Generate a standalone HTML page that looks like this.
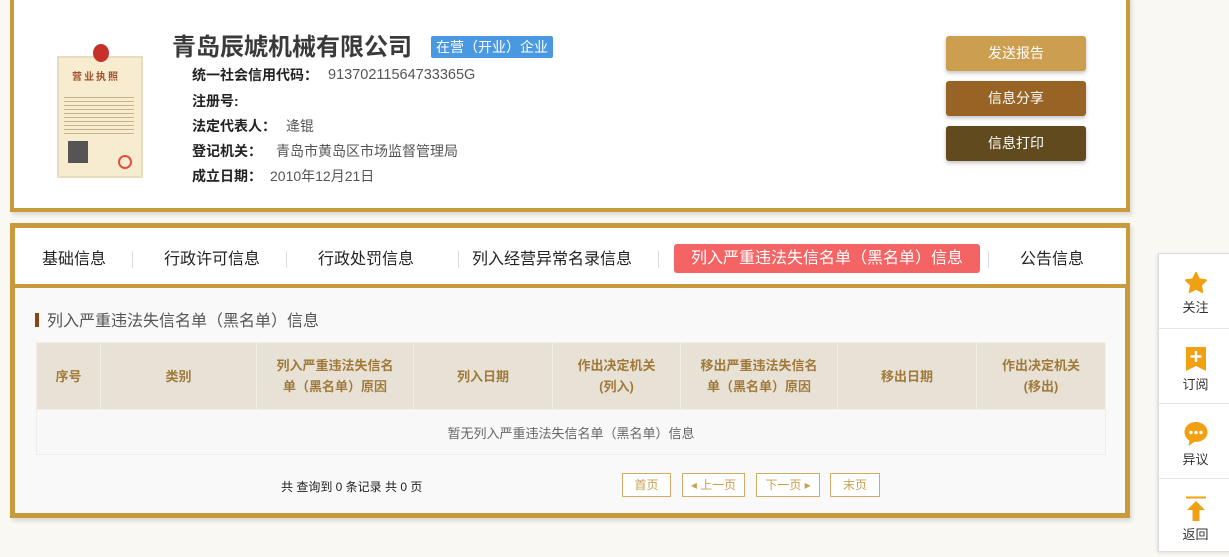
<!DOCTYPE html>
<html><head><meta charset="utf-8"><style>
*{margin:0;padding:0;box-sizing:border-box}
body{width:1229px;height:557px;background:#faf8f2;font-family:"Liberation Sans","Noto Sans CJK SC",sans-serif;position:relative;overflow:hidden;color:#333}
.a{position:absolute}
.card1{left:10px;top:-4px;width:1120px;height:216px;background:#fff;border:4px solid #c99a3b;box-shadow:2px 3px 4px rgba(0,0,0,.12)}
.card2{left:10px;top:223px;width:1120px;height:295px;background:#f9f9f9;border:5px solid #c99a3b;box-shadow:2px 3px 4px rgba(0,0,0,.12)}
.lbl{font-size:14px;font-weight:bold;color:#222;line-height:20px}
.val{font-size:14px;color:#555;line-height:20px}
.btn{left:946px;width:140px;height:35px;border-radius:3px;color:#fff;font-size:14px;text-align:center;line-height:35px;box-shadow:0 2px 4px rgba(0,0,0,.25)}
.tab{top:248px;font-size:16px;color:#222;line-height:24px}
.sep{top:251px;width:1px;height:17px;background:#ddd}
table{border-collapse:collapse;position:absolute;left:36px;top:342px;width:1070px}
th{background:#e8e2d6;color:#a07a3a;font-size:13px;height:67px;border:1px solid #f3efe8;font-weight:bold;line-height:21px}
td{background:#f8f8f8;height:45px;text-align:center;font-size:13px;color:#666;border:1px solid #eee}
.pb{top:473px;height:24px;border:1px solid #d4ac6a;color:#c9a050;font-size:12px;text-align:center;line-height:22px;background:#fff}
.side{left:1158px;top:253px;width:75px;height:299px;background:#fff;border:1px solid #ddd;box-shadow:-1px 1px 3px rgba(0,0,0,.1)}
.sc{position:absolute;left:0;width:73px;height:75px;border-bottom:1px solid #e5e5e5;text-align:center;font-size:13px;color:#333}
.sc svg{display:block;margin:17px auto 2px}
</style></head><body>
<div class="a card1"></div>
<div class="a" style="left:57px;top:56px;width:86px;height:122px;background:#f7eccf;border:2px solid #e8dcc0"></div>
<div class="a" style="left:93px;top:44px;width:16px;height:18px;border-radius:50%;background:#c8302a"></div>
<div class="a" style="left:72px;top:68px;font-size:10px;color:#a0522d;font-weight:bold;letter-spacing:2px">营业执照</div>
<div class="a" style="left:64px;top:94px;width:70px;height:40px;background:repeating-linear-gradient(#f7eccf 0 3px,#c9b48a 3px 4px)"></div>
<div class="a" style="left:68px;top:141px;width:20px;height:22px;background:#555"></div>
<div class="a" style="left:118px;top:155px;width:14px;height:14px;border-radius:50%;border:2px solid #e05040"></div>

<div class="a" style="left:172px;top:33px;font-size:24px;line-height:30px;font-weight:bold;color:#3a3a3a">青岛辰虓机械有限公司</div>
<div class="a" style="left:431px;top:36px;width:122px;height:22px;background:#4a98e0;border-radius:2px;color:#fff;font-size:14px;text-align:center;line-height:22px">在营（开业）企业</div>
<div class="a lbl" style="left:192px;top:65px">统一社会信用代码：</div><div class="a val" style="left:328px;top:65px;font-size:14.5px">91370211564733365G</div>
<div class="a lbl" style="left:192px;top:91px">注册号:</div>
<div class="a lbl" style="left:192px;top:116px">法定代表人：</div><div class="a val" style="left:286px;top:116px">逄锟</div>
<div class="a lbl" style="left:192px;top:141px">登记机关：</div><div class="a val" style="left:276px;top:141px">青岛市黄岛区市场监督管理局</div>
<div class="a lbl" style="left:192px;top:166px">成立日期：</div><div class="a val" style="left:270px;top:166px">2010年12月21日</div>

<div class="a btn" style="top:36px;background:#cc9f50">发送报告</div>
<div class="a btn" style="top:81px;background:#976425">信息分享</div>
<div class="a btn" style="top:126px;background:#614a1d">信息打印</div>

<div class="a card2"></div>
<div class="a" style="left:15px;top:228px;width:1111px;height:56px;background:#fff"></div>
<div class="a" style="left:15px;top:284px;width:1111px;height:4px;background:#c99a3b"></div>
<div class="a tab" style="left:42px">基础信息</div><div class="a sep" style="left:132px"></div>
<div class="a tab" style="left:164px">行政许可信息</div><div class="a sep" style="left:286px"></div>
<div class="a tab" style="left:318px">行政处罚信息</div><div class="a sep" style="left:458px"></div>
<div class="a tab" style="left:472px">列入经营异常名录信息</div><div class="a sep" style="left:658px"></div>
<div class="a" style="left:674px;top:244px;width:306px;height:29px;background:#f46464;border-radius:3px;color:#fff;font-size:16px;text-align:center;line-height:29px">列入严重违法失信名单（黑名单）信息</div>
<div class="a sep" style="left:988px"></div>
<div class="a tab" style="left:1020px">公告信息</div>

<div class="a" style="left:35px;top:313px;width:4px;height:14px;background:#8b4513"></div>
<div class="a" style="left:47px;top:310px;font-size:16px;line-height:24px;color:#555">列入严重违法失信名单（黑名单）信息</div>

<table>
<tr><th style="width:64px">序号</th><th style="width:156px">类别</th><th style="width:157px">列入严重违法失信名<br>单（黑名单）原因</th><th style="width:139px">列入日期</th><th style="width:128px">作出决定机关<br>(列入)</th><th style="width:157px">移出严重违法失信名<br>单（黑名单）原因</th><th style="width:139px">移出日期</th><th>作出决定机关<br>(移出)</th></tr>
<tr><td colspan="8">暂无列入严重违法失信名单（黑名单）信息</td></tr>
</table>

<div class="a" style="left:281px;top:478px;font-size:12px;line-height:18px;color:#222">共 查询到 0 条记录 共 0 页</div>
<div class="a pb" style="left:622px;width:49px">首页</div>
<div class="a pb" style="left:682px;width:63px">◂ 上一页</div>
<div class="a pb" style="left:756px;width:64px">下一页 ▸</div>
<div class="a pb" style="left:830px;width:50px">末页</div>

<div class="a side">
<div class="sc" style="top:0"><svg width="26" height="24" viewBox="0 0 24 24"><path d="M12 1.5l3.2 6.6 7.2 1-5.2 5 1.3 7.2L12 17.9l-6.5 3.4 1.3-7.2-5.2-5 7.2-1z" fill="#f0a010" stroke="#f0a010" stroke-linejoin="round" stroke-width="1.5"/></svg>关注</div>
<div class="sc" style="top:75px"><svg width="24" height="26" viewBox="0 0 24 26"><path d="M2 1h20v24l-10-5-10 5z" fill="#f0a010"/><path d="M12 5v11M6.5 10.5h11" stroke="#fff" stroke-width="2.4"/></svg>订阅</div>
<div class="sc" style="top:150px"><svg width="26" height="26" viewBox="0 0 26 26"><path d="M13 1C6.4 1 1.5 5.5 1.5 11.2c0 3.6 2 6.5 5 8.3L5.5 25l6-4.2c.5.1 1 .1 1.5.1 6.6 0 11.5-4.4 11.5-9.8S19.6 1 13 1z" fill="#f0a010"/><circle cx="8" cy="11.5" r="1.7" fill="#fff"/><circle cx="13" cy="11.5" r="1.7" fill="#fff"/><circle cx="18" cy="11.5" r="1.7" fill="#fff"/></svg>异议</div>
<div class="sc" style="top:225px;border:0"><svg width="24" height="26" viewBox="0 0 24 26"><path d="M2 1.5h20" stroke="#f0a010" stroke-width="2"/><path d="M12 5l-9 9h5.5v11h7V14H21z" fill="#f0a010"/></svg>返回</div>
</div>
</body></html>
